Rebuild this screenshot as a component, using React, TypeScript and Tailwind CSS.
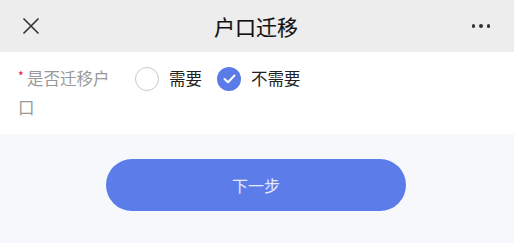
import { useState } from 'react';

const options = ['需要', '不需要'];

export default function App() {
  const [choice, setChoice] = useState('不需要');

  return (
    <div
      className="w-[514px] min-h-[243px] bg-[#f7f8fc]"
      style={{ fontFamily: '"Noto Sans CJK SC", "Noto Sans", sans-serif' }}
    >
      {/* header */}
      <div className="h-[52px] bg-[#ededed] flex items-center justify-between pl-[22px] pr-[24px]">
        <svg width="18" height="18" viewBox="0 0 18 18" className="text-[#333]">
          <path d="M1.5 1.5 L16.5 16.5 M16.5 1.5 L1.5 16.5" stroke="currentColor" strokeWidth="1.6" />
        </svg>
        <h1 className="text-[21px] font-normal text-[#111] leading-none [-webkit-text-stroke:0.15px_#111]">户口迁移</h1>
        <div className="flex gap-1 items-center w-[18px] justify-end">
          <span className="w-1 h-1 rounded-full bg-[#333]" />
          <span className="w-1 h-1 rounded-full bg-[#333]" />
          <span className="w-1 h-1 rounded-full bg-[#333]" />
        </div>
      </div>

      {/* form row */}
      <div className="bg-white flex items-start pl-[18px] pr-4 py-3">
        <label className="w-[96px] text-[16.5px] leading-[29px] text-[#999] before:content-['*'] before:inline-block before:w-[9px] before:text-[#ee0a24] before:text-[12px] before:align-top before:leading-[24px]">
          是否迁移户口
        </label>
        <div className="flex items-center ml-[21px] h-[29px] gap-[15px]">
          {options.map((opt) => {
            const checked = choice === opt;
            return (
              <button
                key={opt}
                onClick={() => setChoice(opt)}
                className="flex items-center gap-[10px] text-[16.5px] text-[#222]"
              >
                {checked ? (
                  <span className="w-[24px] h-[24px] rounded-full bg-[#5b7be8] flex items-center justify-center">
                    <svg width="13" height="10" viewBox="0 0 13 10">
                      <path d="M1.5 5 L5 8.3 L11.5 1.5" fill="none" stroke="white" strokeWidth="2" strokeLinecap="round" strokeLinejoin="round" />
                    </svg>
                  </span>
                ) : (
                  <span className="w-[24px] h-[24px] rounded-full border border-[#c8c9cc]" />
                )}
                {opt}
              </button>
            );
          })}
        </div>
      </div>

      {/* next button */}
      <div className="flex justify-center pt-[25px]">
        <button className="w-[300px] h-[52px] rounded-full bg-[#5b7ce9] text-[16px] text-white/85 mr-[2px]">
          下一步
        </button>
      </div>
    </div>
  );
}
